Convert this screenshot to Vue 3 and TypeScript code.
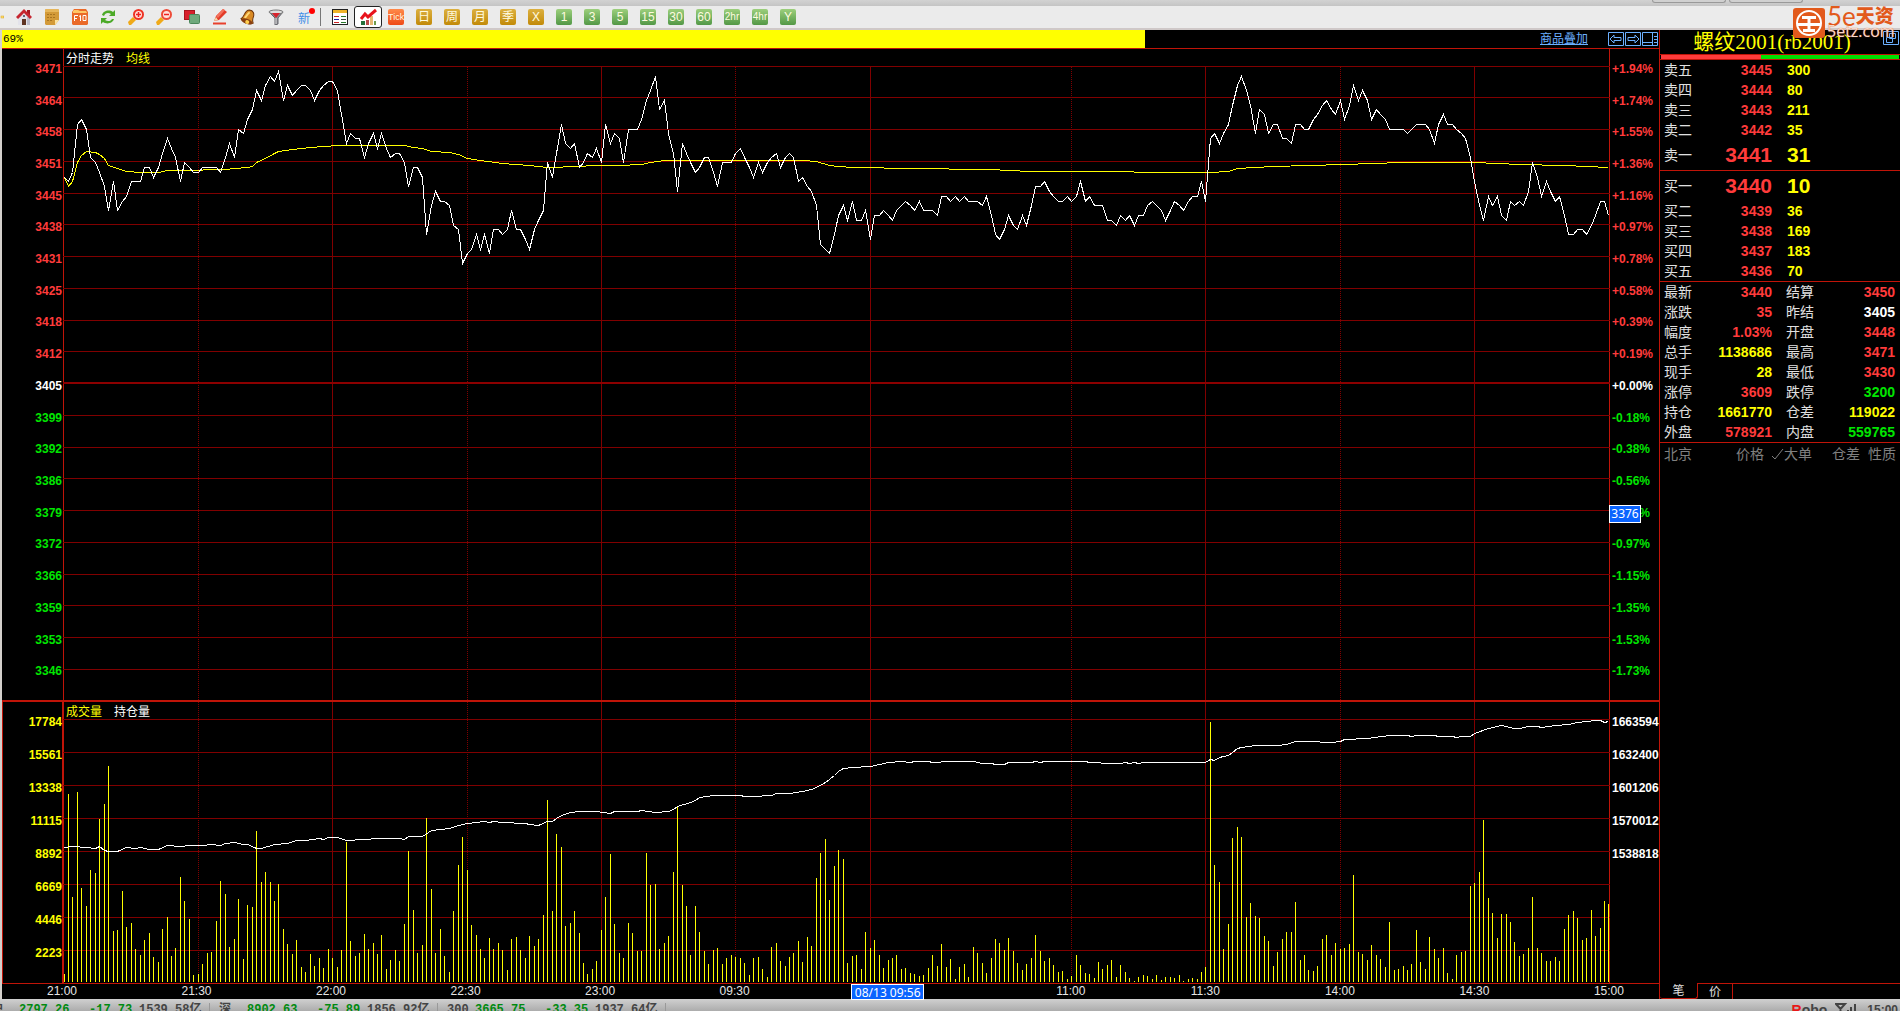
<script setup lang="ts">
type Tone = 'red' | 'green' | 'yellow' | 'white'
type Pair = [number, number]

const SESSION = 345
const PLOT_WIDTH = 1545

const periods = [
  { text: 'Tick', kind: 'tick' },
  { text: '日', kind: 'gold' },
  { text: '周', kind: 'gold' },
  { text: '月', kind: 'gold' },
  { text: '季', kind: 'gold' },
  { text: 'X', kind: 'gold' },
  { text: '1', kind: 'leaf' },
  { text: '3', kind: 'leaf' },
  { text: '5', kind: 'leaf' },
  { text: '15', kind: 'leaf' },
  { text: '30', kind: 'leaf' },
  { text: '60', kind: 'leaf' },
  { text: '2hr', kind: 'leaf small' },
  { text: '4hr', kind: 'leaf small' },
  { text: 'Y', kind: 'leaf' },
]

const priceLabels = [
  3471, 3464, 3458, 3451, 3445, 3438, 3431, 3425, 3418, 3412,
  3405, 3399, 3392, 3386, 3379, 3372, 3366, 3359, 3353, 3346,
]
const percentLabels = [
  '+1.94%', '+1.74%', '+1.55%', '+1.36%', '+1.16%', '+0.97%', '+0.78%', '+0.58%', '+0.39%', '+0.19%',
  '+0.00%', '-0.18%', '-0.38%', '-0.56%', '-0.76%', '-0.97%', '-1.15%', '-1.35%', '-1.53%', '-1.73%',
]
const volumeLabels = [17784, 15561, 13338, 11115, 8892, 6669, 4446, 2223]
const interestLabels = ['1663594', '1632400', '1601206', '1570012', '1538818', '', '', '']

function axisTone(i: number): Tone {
  return i < 10 ? 'red' : i === 10 ? 'white' : 'green'
}

/* Closing price of every minute of the session */
const prices: number[] = [
  3448, 3447, 3449, 3459, 3460, 3458, 3452, 3451, 3449, 3446,
  3441, 3447, 3441, 3443, 3444, 3447, 3447, 3447, 3450, 3450,
  3448, 3450, 3453, 3456, 3454, 3452, 3447, 3451, 3450, 3449,
  3449, 3450, 3450, 3450, 3450, 3449, 3452, 3455, 3452, 3458,
  3457, 3460, 3462, 3466, 3464, 3467, 3469, 3468, 3470, 3464,
  3467, 3465, 3466, 3467, 3467, 3466, 3464, 3466, 3467, 3468,
  3468, 3466, 3461, 3455, 3457, 3456, 3456, 3452, 3455, 3457,
  3454, 3457, 3454, 3452, 3453, 3453, 3451, 3446, 3450, 3450,
  3448, 3436, 3442, 3445, 3443, 3443, 3442, 3438, 3437, 3430,
  3432, 3433, 3436, 3433, 3436, 3432, 3437, 3437, 3436, 3437,
  3441, 3437, 3437, 3435, 3433, 3437, 3439, 3441, 3451, 3448,
  3453, 3459, 3455, 3454, 3455, 3450, 3451, 3453, 3452, 3454,
  3451, 3459, 3455, 3457, 3456, 3451, 3458, 3458, 3458, 3460,
  3464, 3466, 3469, 3462, 3464, 3457, 3453, 3445, 3455, 3453,
  3451, 3449, 3450, 3452, 3452, 3449, 3446, 3451, 3451, 3451,
  3453, 3454, 3452, 3450, 3448, 3451, 3449, 3451, 3452, 3453,
  3450, 3452, 3453, 3452, 3447, 3448, 3446, 3445, 3442, 3434,
  3433, 3432, 3436, 3440, 3442, 3439, 3443, 3439, 3439, 3441,
  3435, 3440, 3440, 3441, 3440, 3439, 3441, 3442, 3443, 3442,
  3441, 3443, 3441, 3441, 3441, 3440, 3444, 3444, 3443, 3444,
  3443, 3444, 3443, 3443, 3443, 3442, 3444, 3440, 3436, 3435,
  3437, 3440, 3438, 3437, 3440, 3438, 3442, 3446, 3446, 3447,
  3445, 3444, 3443, 3443, 3444, 3443, 3444, 3447, 3443, 3444,
  3442, 3442, 3442, 3439, 3439, 3438, 3440, 3439, 3440, 3438,
  3440, 3440, 3442, 3443, 3442, 3441, 3439, 3441, 3443, 3442,
  3441, 3443, 3444, 3444, 3447, 3443, 3456, 3457, 3455, 3457,
  3459, 3463, 3467, 3469, 3466, 3463, 3457, 3462, 3461, 3457,
  3459, 3459, 3456, 3456, 3455, 3459, 3459, 3458, 3458, 3460,
  3461, 3463, 3464, 3462, 3461, 3464, 3460, 3463, 3467, 3464,
  3466, 3464, 3460, 3462, 3461, 3460, 3458, 3458, 3458, 3458,
  3457, 3458, 3459, 3459, 3459, 3458, 3455, 3459, 3461, 3459,
  3459, 3458, 3457, 3456, 3452, 3447, 3442, 3439, 3444, 3442,
  3444, 3440, 3439, 3443, 3442, 3443, 3442, 3445, 3451, 3448,
  3444, 3447, 3445, 3443, 3444, 3440, 3436, 3436, 3437, 3437,
  3436, 3438, 3440, 3443, 3443, 3440,
]

/* Average price as [minute, price] */
const averages: Pair[] = [
  [0, 3448], [1, 3446.1], [2, 3447], [3, 3451], [4, 3452.4], [5, 3453.3], [7, 3453.2], [8, 3452.8],
  [9, 3451.9], [10, 3450.4], [12, 3449.8], [14, 3449.2], [17, 3449], [21, 3449], [23, 3449.3],
  [30, 3449.4], [32, 3449.5], [36, 3449.5], [38, 3449.7], [41, 3450], [42, 3450.2], [43, 3451],
  [45, 3451.9], [47, 3452.9], [48, 3453.3], [51, 3453.8], [55, 3454.1], [61, 3454.5], [76, 3454.5],
  [78, 3454.2], [80, 3454], [82, 3453.3], [86, 3453.2], [88, 3452.7], [90, 3451.9], [93, 3451.5],
  [98, 3450.9], [104, 3450.5], [108, 3450], [110, 3450], [113, 3450.3], [120, 3450.4], [124, 3450.5],
  [129, 3450.6], [131, 3451.1], [134, 3451.4], [165, 3451.4], [168, 3451.2], [171, 3450.5],
  [173, 3450.2], [176, 3450], [182, 3450], [184, 3449.8], [195, 3449.7], [200, 3449.6], [208, 3449.6],
  [210, 3449.4], [217, 3449.2], [238, 3449.1], [240, 3449], [256, 3449], [260, 3449.2], [262, 3449.7],
  [266, 3450.1], [270, 3450.2], [278, 3450.4], [286, 3450.6], [292, 3450.8], [299, 3451], [315, 3451],
  [320, 3450.8], [325, 3450.6], [335, 3450.5], [340, 3450.2], [345, 3450.1],
]

/* Bar height of every minute, 33 units for each 2223 lots */
const volumes: number[] = [
  8, 188, 85, 190, 94, 76, 112, 109, 163, 178,
  216, 51, 52, 91, 55, 59, 33, 27, 42, 49,
  25, 20, 53, 65, 26, 34, 105, 81, 63, 7,
  8, 18, 29, 30, 61, 101, 88, 35, 43, 83,
  23, 77, 75, 151, 100, 110, 100, 81, 98, 53,
  38, 28, 42, 15, 10, 28, 16, 24, 14, 33,
  24, 15, 32, 140, 41, 26, 29, 48, 33, 39,
  28, 47, 13, 22, 32, 21, 58, 131, 72, 29,
  37, 164, 93, 29, 53, 26, 10, 71, 117, 145,
  112, 57, 47, 33, 24, 44, 33, 39, 32, 12,
  43, 45, 32, 24, 46, 36, 43, 67, 182, 71,
  148, 135, 56, 59, 71, 49, 19, 8, 13, 21,
  52, 85, 128, 58, 29, 24, 59, 49, 31, 31,
  129, 97, 98, 33, 39, 46, 110, 176, 97, 76,
  27, 76, 50, 31, 18, 32, 34, 18, 24, 27,
  25, 24, 19, 7, 24, 25, 13, 5, 35, 39,
  21, 16, 25, 29, 41, 20, 45, 36, 104, 129,
  143, 82, 116, 132, 123, 19, 26, 27, 13, 50,
  34, 42, 27, 14, 22, 24, 27, 13, 14, 9,
  8, 6, 7, 14, 27, 16, 38, 15, 23, 3,
  15, 18, 5, 35, 29, 19, 9, 24, 43, 39,
  32, 44, 31, 19, 12, 18, 24, 47, 31, 21,
  24, 17, 10, 11, 3, 6, 27, 17, 9, 8,
  4, 20, 13, 17, 22, 5, 17, 10, 4, 1,
  5, 7, 6, 3, 7, 2, 5, 5, 4, 7,
  1, 3, 4, 3, 10, 15, 260, 117, 100, 33,
  58, 144, 155, 145, 65, 79, 66, 64, 46, 41,
  16, 30, 43, 50, 50, 80, 22, 27, 12, 11,
  16, 43, 47, 27, 39, 33, 34, 38, 107, 30,
  28, 22, 37, 27, 23, 15, 60, 12, 13, 16,
  12, 18, 52, 20, 13, 45, 33, 24, 34, 9,
  3, 27, 30, 31, 96, 99, 110, 162, 84, 69,
  44, 68, 68, 60, 40, 26, 28, 34, 85, 34,
  29, 21, 21, 25, 21, 53, 67, 71, 64, 42,
  44, 72, 46, 54, 81, 78,
]

/* Open interest as [minute, height], 33 units for each 31194 lots */
const interest: Pair[] = [
  [0, 136], [2, 137], [5, 136], [7, 135], [8, 137], [9, 133], [10, 132], [12, 132], [14, 136],
  [16, 135], [17, 136], [19, 134], [21, 134], [23, 138], [26, 137], [28, 138], [31, 138], [33, 139],
  [35, 138], [36, 140], [38, 141], [40, 139], [41, 139], [43, 135], [44, 135], [47, 139], [50, 140],
  [52, 143], [54, 143], [57, 145], [58, 144], [59, 146], [61, 146], [63, 143], [67, 144], [70, 145],
  [75, 145], [76, 144], [77, 147], [80, 147], [82, 153], [86, 155], [88, 158], [90, 160], [94, 162],
  [95, 161], [96, 162], [98, 161], [103, 160], [104, 159], [106, 158], [108, 162], [109, 162],
  [110, 165], [111, 168], [113, 171], [115, 172], [119, 172], [122, 170], [123, 172], [128, 172],
  [129, 173], [132, 171], [135, 172], [136, 174], [137, 177], [140, 181], [141, 183], [142, 186],
  [145, 188], [151, 188], [152, 187], [154, 187], [158, 188], [159, 190], [162, 190], [165, 192],
  [167, 194], [168, 196], [170, 201], [172, 208], [173, 212], [174, 215], [176, 216], [180, 217],
  [184, 221], [187, 222], [189, 221], [190, 222], [193, 222], [194, 221], [198, 222], [203, 222],
  [205, 220], [207, 220], [208, 219], [210, 219], [211, 221], [216, 221], [217, 222], [218, 221],
  [219, 222], [228, 222], [229, 221], [234, 220], [236, 220], [237, 221], [238, 220], [239, 221],
  [240, 220], [241, 221], [255, 221], [256, 224], [257, 223], [258, 226], [259, 227], [260, 228],
  [261, 231], [262, 235], [263, 236], [266, 238], [271, 238], [273, 239], [275, 242], [280, 242],
  [281, 241], [283, 241], [285, 242], [286, 244], [291, 245], [296, 248], [300, 248], [301, 247],
  [302, 248], [306, 248], [307, 247], [310, 247], [311, 246], [312, 247], [314, 247], [315, 250],
  [318, 255], [321, 258], [324, 255], [325, 255], [327, 257], [329, 257], [330, 256], [333, 258],
  [336, 259], [338, 261], [340, 262], [342, 263], [343, 263], [344, 261], [345, 262],
]

/* The first minute stands one unit right of the axis line */
const xOf = (minute: number) => Math.floor(1 + (minute * PLOT_WIDTH) / SESSION) - 0.5 + (minute < SESSION ? 1 : 0)
const priceY = (price: number) => Math.round(317 - (price - 3405) * 4.8) + 0.5

const priceLine = prices.map((p, m) => `${xOf(m)},${priceY(p)}`).join(' ')
const averageLine = averages.map(([m, p]) => `${xOf(m)},${priceY(p)}`).join(' ')
const interestLine = interest.map(([m, h]) => `${xOf(m)},${281.5 - h}`).join(' ')
const volumePath = volumes.map((h, m) => `M${xOf(m)} 280V${280 - h}`).join('')

const priceRows = priceLabels.map((_, i) => Math.floor(i * 31.75) + 0.5).filter((_, i) => i !== 10)
const volumeRows = volumeLabels.map((_, i) => 17.5 + 33 * i)
const solidColumns = [60, 120, 180, 255, 315]
const dottedColumns = [30, 90, 150, 225, 285]

/* Each time label and the minutes up to the next one */
const times = [
  { text: '21:00', span: 30 },
  { text: '21:30', span: 30 },
  { text: '22:00', span: 30 },
  { text: '22:30', span: 30 },
  { text: '23:00', span: 30 },
  { text: '09:30', span: 75 },
  { text: '11:00', span: 30 },
  { text: '11:30', span: 30 },
  { text: '14:00', span: 30 },
  { text: '14:30', span: 30 },
]
const cursorLeft = `${(176 / SESSION) * 100}%`

const asks = [
  { name: '卖五', price: 3445, lots: 300 },
  { name: '卖四', price: 3444, lots: 80 },
  { name: '卖三', price: 3443, lots: 211 },
  { name: '卖二', price: 3442, lots: 35 },
  { name: '卖一', price: 3441, lots: 31 },
]
const bids = [
  { name: '买一', price: 3440, lots: 10 },
  { name: '买二', price: 3439, lots: 36 },
  { name: '买三', price: 3438, lots: 169 },
  { name: '买四', price: 3437, lots: 183 },
  { name: '买五', price: 3436, lots: 70 },
]

interface Stat { a: string; av: string; at: Tone; b: string; bv: string; bt: Tone }
const stats: Stat[] = [
  { a: '最新', av: '3440', at: 'red', b: '结算', bv: '3450', bt: 'red' },
  { a: '涨跌', av: '35', at: 'red', b: '昨结', bv: '3405', bt: 'white' },
  { a: '幅度', av: '1.03%', at: 'red', b: '开盘', bv: '3448', bt: 'red' },
  { a: '总手', av: '1138686', at: 'yellow', b: '最高', bv: '3471', bt: 'red' },
  { a: '现手', av: '28', at: 'yellow', b: '最低', bv: '3430', bt: 'red' },
  { a: '涨停', av: '3609', at: 'red', b: '跌停', bv: '3200', bt: 'green' },
  { a: '持仓', av: '1661770', at: 'yellow', b: '仓差', bv: '119022', bt: 'yellow' },
  { a: '外盘', av: '578921', at: 'red', b: '内盘', bv: '559765', bt: 'green' },
]

const indices = [
  { name: '沪', value: '2797.26', change: '-17.73', amount: '1539.58亿' },
  { name: '深', value: '8902.63', change: '-75.89', amount: '1856.92亿' },
  { name: '300', value: '3665.75', change: '-33.35', amount: '1937.64亿' },
]
</script>

<template>
  <div class="app">
    <div class="window-edge"><i class="stub"></i><i class="stub"></i></div>

    <nav class="toolbar" aria-label="工具栏">
      <button class="tool cut" aria-label="返回">
        <svg width="16" height="16" viewBox="0 0 16 16"><rect x="4" y="4" width="11" height="8" fill="#ffe070" stroke="#d9a520" stroke-width="2" /></svg>
      </button>
      <button class="tool" aria-label="首页">
        <svg width="16" height="16" viewBox="0 0 16 16">
          <rect x="11" y="1" width="3" height="5" fill="#a51a22" />
          <path d="M2 8v8h12V8L8 2z" fill="#e3e3ea" /><path d="M11 8h3v8h-3z" fill="#bcbcc8" />
          <path d="M0 8 8 0l8 8-2 2-6-6-6 6z" fill="#c62630" />
          <rect x="6" y="10" width="4" height="6" fill="#5f3422" /><rect x="7" y="6" width="2" height="2" fill="#667" />
        </svg>
      </button>
      <button class="tool" aria-label="公告">
        <svg width="16" height="16" viewBox="0 0 16 16">
          <path d="M2 0h12l1 1v10l-4 5H2l-1-1V1z" fill="#d39a38" /><path d="M2 0h12l1 1v2H1V1z" fill="#e6b65a" /><path d="M15 11h-4v5z" fill="#fbe2a0" />
          <path d="M3 5.500h9M3 8.500h8M3 11.500h5" stroke="#a87420" stroke-dasharray="2 1" />
        </svg>
      </button>
      <button class="tool" aria-label="F10">
        <svg width="16" height="16" viewBox="0 0 16 16">
          <path d="M0 3 2 0h12l2 3v12l-1 1H1l-1-1z" fill="#ea6a28" /><path d="M1 4V2l1-1h4l2 1h6l1 2z" fill="#ffc766" />
          <path d="M2.500 12V6.500H6M2.500 9.500H5M7 7.500l1.500-1V12M11 6.500h3v5h-3z" fill="none" stroke="#fff" />
        </svg>
      </button>
      <button class="tool" aria-label="刷新">
        <svg width="16" height="16" viewBox="0 0 16 16" fill="#4caa28">
          <path d="M2 6C3 2 9 0 13 3l2-2v6H9l2-2C8 3 5 4 4 7z" /><path d="M14 10c-1 4-7 6-11 3l-2 2V9h6l-2 2c3 2 6 1 7-1z" />
        </svg>
      </button>
      <button class="tool" aria-label="放大">
        <svg width="16" height="16" viewBox="0 0 16 16">
          <path d="m0 13 5-5 3 3-5 5H1z" fill="#f0aa18" /><circle cx="10.500" cy="5.500" r="4.500" fill="#ffe3dc" stroke="#ee3324" stroke-width="2" />
          <path d="M8 5.500h5M10.500 3v5" stroke="#e22" stroke-width="1.500" />
        </svg>
      </button>
      <button class="tool" aria-label="缩小">
        <svg width="16" height="16" viewBox="0 0 16 16">
          <path d="m0 13 5-5 3 3-5 5H1z" fill="#f0aa18" /><circle cx="10.500" cy="5.500" r="4.500" fill="#ffe3dc" stroke="#ee4b38" stroke-width="2" />
          <path d="M8 5.500h5" stroke="#e22" stroke-width="1.500" />
        </svg>
      </button>
      <button class="tool" aria-label="叠加">
        <svg width="16" height="16" viewBox="0 0 16 16">
          <rect x="0.500" y="1.500" width="10" height="9" fill="#d8202c" stroke="#a8151e" /><rect x="5.500" y="5.500" width="10" height="9" rx="1" fill="#6fa97c" stroke="#4b875a" />
        </svg>
      </button>
      <button class="tool" aria-label="画线">
        <svg width="16" height="16" viewBox="0 0 16 16">
          <path d="m2 12 2-5 7-7 4 3-8 8z" fill="#e23b28" /><path d="m4 7 7-7 2 1-7 8z" fill="#f4705c" /><path d="m2 12 2-4 2 3z" fill="#f6d9a8" />
          <path d="M1 14.500h13" stroke="#e8402c" stroke-width="2" />
        </svg>
      </button>
      <button class="tool" aria-label="预警">
        <svg width="16" height="16" viewBox="0 0 16 16">
          <g transform="rotate(20 8 8)">
            <path d="M2 12C5 9 2 3 7 1c4-1 6 2 6 5s0 4 2 6c-3 3-9 3-13 0z" fill="#d98a24" stroke="#6b3208" /><path d="M5 10c2-2 1-5 3-7" stroke="#ffd978" stroke-width="2" fill="none" />
            <ellipse cx="8.500" cy="12.500" rx="6" ry="2.500" fill="#8a4010" /><circle cx="9" cy="13" r="2" fill="#ffcf50" />
          </g>
        </svg>
      </button>
      <button class="tool" aria-label="筛选">
        <svg width="16" height="16" viewBox="0 0 16 16">
          <path d="M1 3h14l-5 6v6l-3 1V9z" fill="#8c8c92" stroke="#66666c" /><ellipse cx="8" cy="3" rx="7" ry="2" fill="#ddd" stroke="#777" />
          <path d="M4 4h8L8 9z" fill="#d8222c" /><path d="M8 9v6" stroke="#ddd" />
        </svg>
      </button>
      <button class="tool fresh">新<i class="dot"></i></button>
      <i class="divider"></i>
      <button class="tool" aria-label="报价">
        <svg width="16" height="16" viewBox="0 0 16 16" shape-rendering="crispEdges">
          <rect x="0.500" y="0.500" width="15" height="15" fill="#fff" stroke="#222" /><path d="M1 1h14v3H1z" fill="#f0b429" />
          <path d="M2 7.500h5M2 13.500h5" stroke="#c22" /><path d="M2 10.500h5" stroke="#22a" /><path d="M9 7.500h5M9 13.500h5" stroke="#2a7a2a" /><path d="M9 10.500h5" stroke="#444" />
        </svg>
      </button>
      <button class="tool current" aria-label="分时图">
        <svg width="18" height="18" viewBox="0 0 18 18">
          <path d="M2 17v-4h4v4z" fill="#23703a" /><path d="M7 17v-5h3v5z" fill="#b84a4a" /><path d="M11 17V8h3v9z" fill="#e7b873" /><path d="M15 17v-4h2v4z" fill="#6d9b4c" />
          <path d="m2 11 4-5 3 3 8-7" fill="none" stroke="#e8131c" stroke-width="3" />
        </svg>
      </button>
      <button v-for="p in periods" :key="p.text" class="tool"><span class="tile" :class="p.kind">{{ p.text }}</span></button>
    </nav>

    <main class="main">
      <section class="chart">
        <header class="chart-head">
          <div class="progress"><div class="progress-fill">69%</div></div>
          <a href="#" class="overlay-link">商品叠加</a>
          <button class="frame" aria-label="前移">
            <svg width="16" height="14" viewBox="0 0 16 14"><path d="M.5.5h15v13H.5zM2 7l4-4v2.500h7v3H6V11z" /></svg>
          </button>
          <button class="frame" aria-label="后移">
            <svg width="16" height="14" viewBox="0 0 16 14"><path d="M.5.5h15v13H.5zM14 7l-4-4v2.500H3v3h7V11z" /></svg>
          </button>
          <button class="frame" aria-label="布局">
            <svg width="16" height="14" viewBox="0 0 16 14"><path d="M.5.5h15v13H.5zM10.500 1v12M1 10.500h9M12 4.500h3M12 7.500h3M12 10.500h3" /></svg>
          </button>
        </header>

        <div class="pane price-pane">
          <div class="axis left price-axis">
            <span v-for="(p, i) in priceLabels" :key="p" :class="axisTone(i)">{{ p }}</span>
          </div>
          <div class="plot">
            <div class="legend"><span>分时走势</span><span class="yellow">均线</span></div>
            <svg class="canvas" viewBox="0 0 1547 634" preserveAspectRatio="none">
              <path v-for="y in priceRows" :key="y" :d="`M0 ${y}H1547`" class="grid" />
              <path v-for="m in solidColumns" :key="m" :d="`M${xOf(m)} 0V634`" class="grid" />
              <path v-for="m in dottedColumns" :key="m" :d="`M${xOf(m)} 1V634`" class="grid dotted" />
              <path d="M0 317H1547" class="base" />
              <polyline :points="averageLine" class="line average" />
              <polyline :points="priceLine" class="line" />
            </svg>
          </div>
          <div class="axis right price-axis">
            <span v-for="(p, i) in percentLabels" :key="p" :class="axisTone(i)">{{ p }}</span>
            <output class="marker price-marker">3376</output>
          </div>
        </div>

        <div class="pane volume-pane">
          <div class="axis left volume-axis yellow">
            <span v-for="v in volumeLabels" :key="v">{{ v }}</span>
          </div>
          <div class="plot">
            <div class="legend floating"><span class="yellow">成交量</span><span>持仓量</span></div>
            <svg class="canvas" viewBox="0 0 1547 281" preserveAspectRatio="none">
              <path v-for="y in volumeRows" :key="y" :d="`M0 ${y}H1547`" class="grid" />
              <path v-for="m in solidColumns" :key="m" :d="`M${xOf(m)} 0V281`" class="grid" />
              <path v-for="m in dottedColumns" :key="m" :d="`M${xOf(m)} 0V281`" class="grid dotted" />
              <path :d="volumePath" class="bars" />
              <polyline :points="interestLine" class="line" />
            </svg>
          </div>
          <div class="axis right volume-axis white">
            <span v-for="(v, i) in interestLabels" :key="i">{{ v }}</span>
          </div>
        </div>

        <div class="time-axis">
          <div class="times">
            <span v-for="t in times" :key="t.text" class="slot" :style="{ flexGrow: t.span }"><span class="time">{{ t.text }}</span></span>
            <span class="slot last"><span class="time">15:00</span></span>
            <output class="marker time-marker" :style="{ left: cursorLeft }">08/13 09:56</output>
          </div>
        </div>
      </section>

      <aside class="quote">
        <h1 class="contract">螺纹2001(rb2001)</h1>
        <button class="frame popout" aria-label="弹出">
          <svg width="16" height="14" viewBox="0 0 16 14"><path d="M.5.5h15v13H.5zM6.500 2.500h6v5h-6zM3.500 6.500h6v5h-6z" /></svg>
        </button>
        <div class="ratio"><i class="ratio-buy"></i><i class="ratio-sell"></i></div>

        <table class="book">
          <tbody>
            <tr v-for="r in asks" :key="r.name" :class="{ best: r.name === '卖一' }">
              <th scope="row">{{ r.name }}</th><td class="red">{{ r.price }}</td><td class="lots">{{ r.lots }}</td>
            </tr>
          </tbody>
        </table>
        <table class="book">
          <tbody>
            <tr v-for="r in bids" :key="r.name" :class="{ best: r.name === '买一' }">
              <th scope="row">{{ r.name }}</th><td class="red">{{ r.price }}</td><td class="lots">{{ r.lots }}</td>
            </tr>
          </tbody>
        </table>
        <table class="stats">
          <tbody>
            <tr v-for="s in stats" :key="s.a">
              <th scope="row">{{ s.a }}</th><td :class="s.at">{{ s.av }}</td>
              <th scope="row" class="second">{{ s.b }}</th><td :class="s.bt">{{ s.bv }}</td>
            </tr>
          </tbody>
        </table>
        <div class="ticks-head">
          <span class="city">北京</span><span>价格</span>
          <span class="big"><svg width="13" height="14" viewBox="0 0 13 14"><path d="m1 9 3 3 8-10" fill="none" stroke="#808080" /></svg>大单</span>
          <span class="diff">仓差</span><span>性质</span>
        </div>
        <div class="ticks-body"></div>
        <div class="tabs">
          <button class="tab active">笔</button>
          <button class="tab">价</button>
          <i class="tabs-rest"></i>
        </div>
      </aside>
    </main>

    <footer class="status">
      <span v-for="x in indices" :key="x.name" class="index">
        <b class="index-name">{{ x.name }}</b><b class="index-value">{{ x.value }}</b><b class="index-change">{{ x.change }}</b><b class="index-amount">{{ x.amount }}</b>
      </span>
      <span class="tray">
        <b class="robo"><span class="r">R</span>obo</b>
        <svg width="24" height="12" viewBox="0 0 24 12"><path d="M1 1h9L5.500 6zM5.500 5v7M13 12V7M16 12V4M20 12V1" fill="none" stroke="#444" stroke-width="2" /></svg>
        <b class="clock">15:00</b>
      </span>
    </footer>

    <div class="brand">
      <svg width="32" height="30" viewBox="0 0 32 30">
        <rect width="32" height="30" rx="3" fill="#e25a1c" /><circle cx="16" cy="15" r="12" fill="none" stroke="#fff" stroke-width="2" />
        <path d="M9 9.500h14M4 16.500h24M16 10v13M10 22.500h12" fill="none" stroke="#fff" stroke-width="3" />
      </svg>
      <div class="brand-text"><span class="brand-name"><span class="brand-latin">5e</span>天资</span><span class="brand-url">5etz.com</span></div>
    </div>
  </div>
</template>

<style>
body {
  background: #000;
}
</style>

<style scoped>
.app {
  position: relative;
  display: flex;
  flex-direction: column;
  height: 100vh;
  min-height: 720px;
  overflow: hidden;
  background: #000;
  color: #fff;
  font-family: "Liberation Sans", "Noto Sans CJK SC", sans-serif;
  font-size: 12px;
}
button {
  margin: 0;
  padding: 0;
  border: 0;
  background: none;
  color: inherit;
  font: inherit;
}
svg { display: block; }
.red { color: #ff3b3b; }
.green { color: #00e600; }
.yellow { color: #ff0; }
.white { color: #fff; }

.window-edge {
  flex: none;
  display: flex;
  justify-content: flex-end;
  gap: 3px;
  height: 6px;
  padding-right: 97px;
  background: linear-gradient(#d2d2d2, #c4c4c4);
}
.stub {
  box-sizing: border-box;
  width: 74px;
  height: 3px;
  border: 1px solid #999;
  border-top: 0;
  border-radius: 0 0 4px 4px;
  background: #d0d0d0;
}

.toolbar {
  flex: none;
  display: flex;
  align-items: center;
  height: 22px;
  background: #ebebeb;
  border-bottom: 2px solid #cfc8c8;
}
.tool {
  box-sizing: border-box;
  flex: none;
  display: flex;
  align-items: center;
  justify-content: center;
  width: 28px;
  height: 22px;
}
.cut {
  justify-content: flex-end;
  width: 10px;
  padding-right: 6px;
  overflow: hidden;
}
.current {
  background: #fff;
  border: 1px solid #222;
  border-radius: 3px;
}
.fresh {
  position: relative;
  color: #3f8fe8;
}
.dot {
  position: absolute;
  top: 2px;
  right: 3px;
  width: 6px;
  height: 6px;
  border-radius: 50%;
  background: #f00;
}
.divider {
  width: 1px;
  height: 18px;
  margin: 0 5px 0 2px;
  background: #777;
}
.tile {
  width: 16px;
  height: 16px;
  border-radius: 2px;
  color: #fffbe0;
  font-size: 12px;
  line-height: 16px;
  text-align: center;
}
.tick {
  background: linear-gradient(#ff8a4a, #ef4a16);
  font-family: "Liberation Sans Narrow", "Liberation Sans", sans-serif;
  font-size: 9px;
}
.gold { background: linear-gradient(#dcb040, #c28a08); }
.leaf { background: linear-gradient(#9ccf7c, #539846); }
.small {
  font-family: "Liberation Sans Narrow", "Liberation Sans", sans-serif;
  font-size: 10px;
}

.main {
  flex: 1;
  min-height: 0;
  display: flex;
  border-left: 2px solid #d4d0cc;
}
.chart {
  flex: 1;
  min-width: 0;
  display: flex;
  flex-direction: column;
  border-right: 1px solid #c01408;
}
.chart-head {
  position: relative;
  flex: none;
  display: flex;
  align-items: center;
  justify-content: flex-end;
  gap: 1px;
  height: 18px;
  padding-right: 1px;
  border-bottom: 1px solid #c01408;
}
.progress {
  position: absolute;
  inset: 0;
}
.progress-fill {
  width: 69%;
  padding-left: 1px;
  box-sizing: border-box;
  background: #ff0;
  color: #000;
  font-family: "Liberation Mono", monospace;
  font-size: 11px;
  line-height: 18px;
}
.overlay-link {
  position: relative;
  margin-right: 19px;
  color: #6cb0ff;
  line-height: 18px;
}
.frame {
  position: relative;
  height: 14px;
}
.frame path {
  fill: none;
  stroke: #6cb0ff;
}

.pane {
  display: flex;
  min-height: 0;
}
.price-pane { flex: 651 1 0; }
.volume-pane {
  flex: 281 1 0;
  border-top: 2px solid #c01408;
}
.axis {
  box-sizing: border-box;
  flex: none;
  display: flex;
  flex-direction: column;
  font-weight: 700;
}
.axis > span {
  flex: 1 1 0;
  min-height: 0;
  display: flex;
  align-items: center;
}
.left {
  width: 61px;
  padding-right: 1px;
}
.left > span { justify-content: flex-end; }
.right {
  position: relative;
  width: 49px;
  padding-left: 2px;
}
.price-axis {
  padding-top: 4px;
  padding-bottom: 13px;
}
.volume-axis {
  padding-top: 3px;
  padding-bottom: 14px;
}
.left.volume-axis {
  padding-right: 0;
  border: 1px solid #c01408;
  border-width: 0 1px 0 1px;
}
.plot {
  position: relative;
  flex: 1;
  min-width: 0;
  box-sizing: border-box;
  display: flex;
  flex-direction: column;
  box-shadow: inset 1px 0 #c01408, inset -1px 0 #c01408;
}
.legend {
  flex: none;
  display: flex;
  gap: 12px;
  height: 17px;
  padding-left: 3px;
  line-height: 20px;
}
.floating {
  position: absolute;
  top: 0;
  left: 0;
}
.canvas {
  flex: 1 1 0;
  width: 100%;
  min-height: 0;
  shape-rendering: crispEdges;
}
.grid {
  stroke: #800000;
}
.dotted { stroke-dasharray: 1 1; }
.base {
  stroke: #8c0000;
  stroke-width: 2;
}
.line {
  fill: none;
  stroke: #fff;
}
.average { stroke: #ff0; }
.bars { stroke: #ff0; }

.marker {
  box-sizing: border-box;
  position: absolute;
  border: 1px solid #fff;
  background: #0a64ff;
  color: #fff;
  font-family: "Noto Sans", sans-serif;
  font-weight: 400;
  text-align: center;
  white-space: nowrap;
}
.price-marker {
  top: 70%;
  left: -1px;
  width: 32px;
  height: 18px;
  line-height: 16px;
}
.time-marker {
  top: 0;
  width: 73px;
  height: 16px;
  line-height: 15px;
}
.time-axis {
  flex: none;
  height: 15px;
  padding: 0 50px 0 60px;
  border-top: 1px solid #c01408;
}
.times {
  position: relative;
  display: flex;
}
.slot {
  flex: 1 1 0;
  min-width: 0;
}
.last { flex: none; width: 0; }
.time {
  display: block;
  width: 32px;
  margin-left: -16px;
  color: #e6e6e6;
  line-height: 15px;
  text-align: center;
}

.quote {
  position: relative;
  flex: none;
  display: flex;
  flex-direction: column;
  width: 240px;
}
.contract {
  flex: none;
  height: 24px;
  margin: 0;
  padding-right: 16px;
  color: #ff0;
  font-family: "Liberation Serif", "Noto Sans CJK SC", serif;
  font-size: 21px;
  font-weight: 400;
  line-height: 24px;
  text-align: center;
}
.popout {
  position: absolute;
  top: 1px;
  right: 1px;
}
.ratio {
  flex: none;
  display: flex;
  height: 4px;
  padding: 0 1px;
  border-top: 1px solid #c01408;
  border-bottom: 1px solid #c01408;
}
.ratio-buy {
  width: 42%;
  background: #ff3b3b;
}
.ratio-sell {
  flex: 1;
  background: #00e000;
}
table {
  width: 100%;
  border-collapse: collapse;
  table-layout: fixed;
  font-size: 14px;
}
tr { height: 20px; }
th,
td {
  padding: 0;
  line-height: 20px;
}
th {
  width: 40px;
  padding-left: 4px;
  color: #e0e0e0;
  font-weight: 400;
  text-align: left;
}
td {
  font-weight: 700;
  text-align: right;
}
.book {
  border-bottom: 1px solid #c01408;
}
.book td { width: 68px; }
.book .lots {
  width: auto;
  padding-left: 15px;
  color: #ff0;
  text-align: left;
}
.best { height: 30px; }
.best td { font-size: 21px; }
.stats { border-bottom: 1px solid #c01408; }
.stats td { width: 68px; }
.stats .second { padding-left: 14px; }
.stats td:last-child {
  width: auto;
  padding-right: 5px;
}
.ticks-head {
  flex: none;
  display: flex;
  padding: 0 4px;
  color: #808080;
  font-size: 14px;
  line-height: 22px;
}
.city { margin-right: auto; }
.big {
  display: flex;
  align-items: center;
  margin: 0 20px 0 7px;
}
.diff { margin-right: 8px; }
.ticks-body { flex: 1; }
.tabs {
  flex: none;
  display: flex;
  height: 16px;
}
.tab {
  box-sizing: border-box;
  width: 35px;
  color: #e0e0e0;
  line-height: 14px;
  border-top: 1px solid #c01408;
  border-right: 1px solid #c01408;
}
.tab.active {
  width: 38px;
  border: 1px solid #c01408;
  border-width: 0 1px 1px 0;
  border-radius: 0 0 3px 3px;
}
.tabs-rest {
  flex: 1;
  border-top: 1px solid #c01408;
}

.status {
  box-sizing: border-box;
  flex: none;
  display: flex;
  height: 12px;
  padding: 4px 2px 0 0;
  overflow: hidden;
  background: linear-gradient(#d0d0d0, #acacac);
  color: #444;
  font-family: "Liberation Mono", "Noto Sans CJK SC", monospace;
  font-size: 12px;
  line-height: 14px;
}
.index {
  flex: none;
  display: flex;
  width: 228px;
  box-sizing: border-box;
  padding-left: 9px;
  border-right: 1px solid #999;
}
.index-name { width: 28px; }
.index:first-child {
  width: 210px;
  padding-left: 0;
}
.index:first-child .index-name {
  width: 19px;
  direction: rtl;
  text-indent: 16px;
  overflow: hidden;
}
.index-value {
  width: 70px;
  color: #008a10;
}
.index-change {
  width: 50px;
  color: #008a10;
}
.tray {
  display: flex;
  gap: 8px;
  margin-left: auto;
}
.robo {
  font-family: "Liberation Sans", sans-serif;
  font-size: 14px;
}
.clock {
  font-family: "Liberation Sans", sans-serif;
}
.r { color: #e81818; }

.brand {
  position: absolute;
  top: 8px;
  right: 4px;
  display: flex;
  gap: 2px;
}
.brand-text {
  display: flex;
  flex-direction: column;
  width: 69px;
  white-space: nowrap;
}
.brand-name {
  display: flex;
  align-items: center;
  height: 17px;
  color: #e25a1c;
  font-size: 19px;
  font-weight: 900;
  line-height: 17px;
}
.brand-latin {
  font-family: Lato, sans-serif;
  font-size: 26px;
  font-weight: 400;
}
.brand-url {
  color: #f6d8cc;
  font-family: "Open Sans", sans-serif;
  font-size: 16px;
  line-height: 13px;
  text-shadow: 0 0 1px #e25a1c;
}
</style>
